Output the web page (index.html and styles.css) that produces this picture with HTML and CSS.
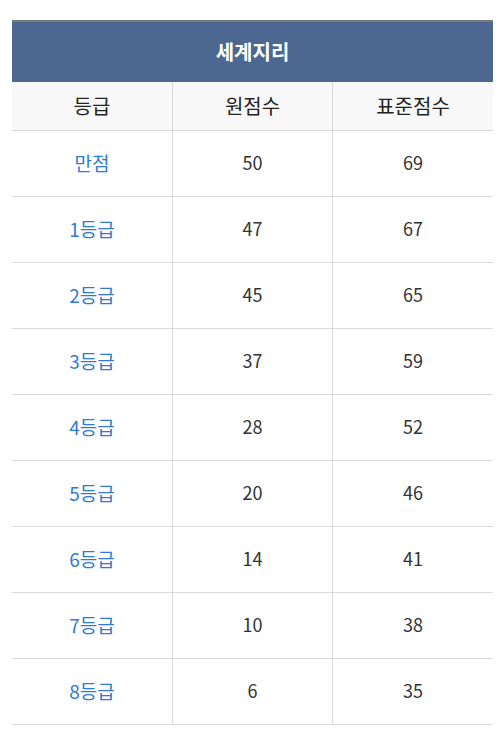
FILE: index.html
```html
<!DOCTYPE html>
<html lang="ko">
<head>
<meta charset="utf-8">
<link rel="stylesheet" href="styles.css">
</head>
<body>
<div class="wrap">
<div class="score" role="table">
<div class="title" role="row">세계지리</div>
<div class="cell head">등급</div><div class="cell head">원점수</div><div class="cell head">표준점수</div>
<div class="cell grade">만점</div><div class="cell">50</div><div class="cell">69</div>
<div class="cell grade">1등급</div><div class="cell">47</div><div class="cell">67</div>
<div class="cell grade">2등급</div><div class="cell">45</div><div class="cell">65</div>
<div class="cell grade">3등급</div><div class="cell">37</div><div class="cell">59</div>
<div class="cell grade">4등급</div><div class="cell">28</div><div class="cell">52</div>
<div class="cell grade">5등급</div><div class="cell">20</div><div class="cell">46</div>
<div class="cell grade">6등급</div><div class="cell">14</div><div class="cell">41</div>
<div class="cell grade">7등급</div><div class="cell">10</div><div class="cell">38</div>
<div class="cell grade">8등급</div><div class="cell">6</div><div class="cell">35</div>
</div>
</div>
</body>
</html>
```
FILE: styles.css
```css
html, body {
  margin: 0;
  padding: 0;
  background: #ffffff;
}
.wrap {
  padding: 20px 10px 0 12px;
}
.score {
  width: 481px;
  display: grid;
  grid-template-columns: 161px 160px 160px;
  font-family: "Noto Sans CJK KR", "Noto Sans", sans-serif;
  color: #333333;
}
.score * {
  box-sizing: border-box;
}
.title {
  grid-column: 1 / -1;
  height: 62px;
  padding-bottom: 2px;
  border-top: 2px solid #7a7a7a;
  background: #4d6890;
  color: #ffffff;
  font-size: 20px;
  font-weight: bold;
  display: flex;
  align-items: center;
  justify-content: center;
}
.cell {
  height: 66px;
  padding-bottom: 3px;
  display: flex;
  align-items: center;
  justify-content: center;
  border-bottom: 1px solid #d9d9d9;
  border-right: 1px solid #d9d9d9;
  font-size: 18px;
  color: #333333;
}
.cell:nth-child(3n + 1) {
  border-right: none;
}
.cell.head {
  height: 49px;
  padding-bottom: 2px;
  background: #f8f8f8;
  font-size: 20px;
  color: #222222;
}
.cell.grade {
  font-size: 19px;
  color: #2f7bd3;
}
```
